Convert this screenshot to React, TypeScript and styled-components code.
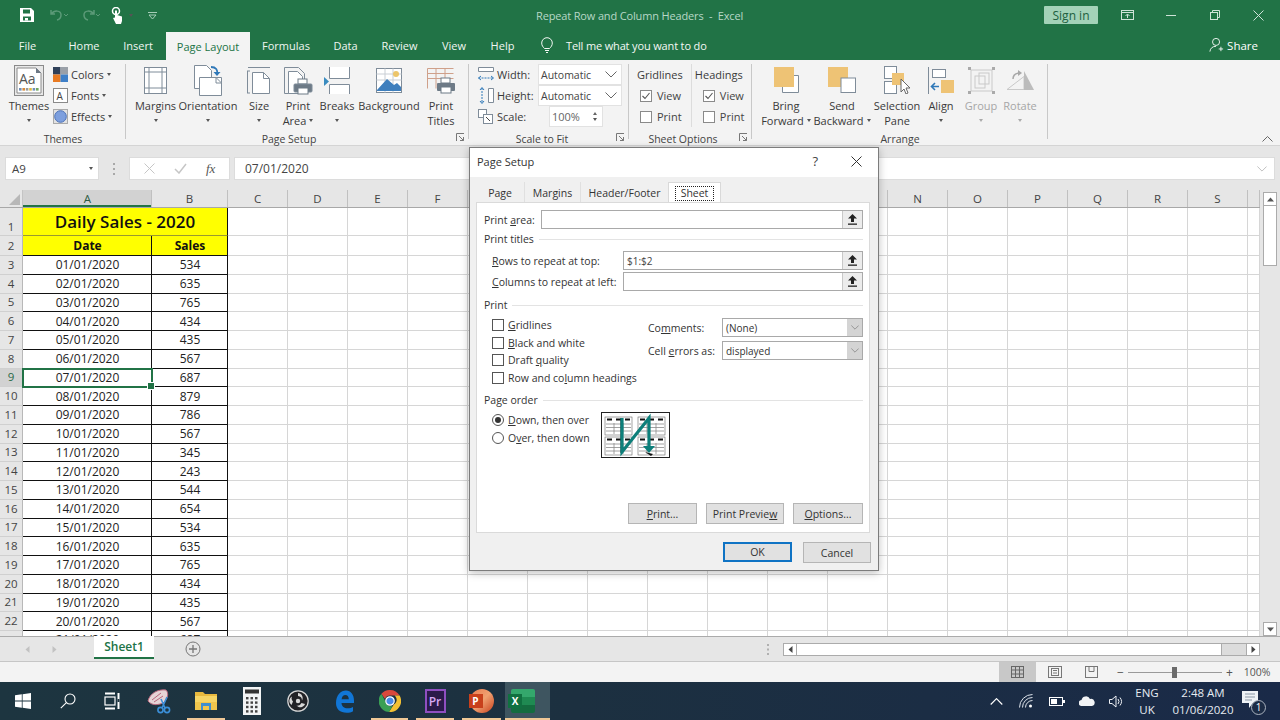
import React from 'react';
import styled, { createGlobalStyle } from 'styled-components';

const GlobalStyle = createGlobalStyle`
  html, body { margin: 0; padding: 0; background: #fff; }
  body { font-family: "Open Sans", "Liberation Sans", sans-serif; overflow: hidden; }
  * { box-sizing: border-box; }
`;

const Page = styled.div`
  position: relative; width: 1280px; height: 720px; overflow: hidden;
  display: flex; flex-direction: column; font-size: 12px; color: #333;
`;

/* ---------- title bar ---------- */
const TitleBar = styled.div`
  height: 30px; background: #217346; display: flex; align-items: center; color: #fff; flex: none;
`;
const Qat = styled.div`
  width: 536px; flex: none; display: flex; align-items: center; padding-left: 8px;
`;
const QatSlot = styled.div<{ $w: number }>`
  width: ${p => p.$w}px; display: flex; justify-content: center; align-items: center; flex: none;
`;
const DocTitle = styled.div`
  font-size: 11px; letter-spacing: -0.15px; color: #b7d8c6; white-space: pre; flex: 1;
`;
const SignIn = styled.div`
  width: 54px; height: 18px; background: #a3d2b8; color: #20603f; font-size: 12px; border-radius: 1px;
  display: flex; align-items: center; justify-content: center; margin-right: 8px; flex: none;
`;
const WinButton = styled.div`
  width: 43.5px; display: flex; justify-content: center; flex: none;
`;

/* ---------- tabs ---------- */
const TabBar = styled.div`
  height: 30px; background: #217346; display: flex; align-items: stretch; flex: none; padding-left: 3px;
`;
const Tab = styled.div<{ $w: number; $active?: boolean; $ml?: number }>`
  width: ${p => p.$w}px; margin-left: ${p => p.$ml ?? 0}px; flex: none;
  display: flex; align-items: center; justify-content: center; font-size: 11px;
  color: ${p => (p.$active ? '#217346' : '#f0f6f2')};
  background: ${p => (p.$active ? '#f3f3f3' : 'transparent')};
  margin-top: ${p => (p.$active ? 2 : 0)}px;
`;
const TellMe = styled.div`
  display: flex; align-items: center; margin-left: 14px; color: #f4f8f5; font-size: 11px; letter-spacing: -0.15px; gap: 13px;
`;
const Share = styled.div`
  margin-left: auto; display: flex; align-items: center; gap: 3px; padding-right: 22px; font-size: 11.5px; color: #fff;
`;

/* ---------- ribbon ---------- */
const Ribbon = styled.div`
  height: 86px; background: #f3f3f3; display: flex; flex: none; border-bottom: 1px solid #d4d4d4;
`;
const Group = styled.div<{ $w: number }>`
  position: relative; width: ${p => p.$w}px; flex: none; display: flex; flex-direction: column;
  &::after {
    content: ''; position: absolute; right: 0; top: 4px; bottom: 6px; width: 1px; background: #c8c8c8;
  }
`;
const GroupBody = styled.div<{ $pl?: number }>`
  height: 70px; margin-top: 2px; display: flex; padding-left: ${p => p.$pl ?? 0}px; flex: none;
`;
const GroupLabel = styled.div<{ $pr?: number }>`
  height: 16px; line-height: 16px; text-align: center; font-size: 10.5px; color: #444;
  padding-right: ${p => p.$pr ?? 0}px; margin-top: -1px;
`;
const Launcher = styled.div`
  position: absolute; right: 4px; bottom: 3px; width: 9px; height: 9px; display: flex;
`;
const LargeBtn = styled.div<{ $w: number; $off?: boolean }>`
  width: ${p => p.$w}px; flex: none; display: flex; flex-direction: column; align-items: center;
  font-size: 11px; line-height: 15px; color: ${p => (p.$off ? '#a6a6a6' : '#3a3a3a')}; white-space: nowrap;
`;
const IconSlot = styled.div`
  height: 36px; display: flex; align-items: center; justify-content: center; flex: none;
`;
const BtnLine = styled.div`
  height: 15px; display: flex; align-items: center; justify-content: center; gap: 3px;
`;
const Caret = styled.span<{ $off?: boolean }>`
  display: inline-block; width: 0; height: 0; border-left: 2.5px solid transparent; border-right: 2.5px solid transparent;
  border-top: 3px solid ${p => (p.$off ? '#aaa' : '#555')};
`;
const SmallCol = styled.div`
  display: flex; flex-direction: column; padding-top: 2px; margin-left: 3px;
`;
const SmallRow = styled.div`
  height: 21px; display: flex; align-items: center; gap: 3px; font-size: 11px; color: #3a3a3a; white-space: nowrap;
`;
const ScaleCol = styled.div`
  display: flex; flex-direction: column; padding: 2px 0 0 9px;
`;
const IconBox = styled.div`
  width: 16px; flex: none; display: flex; align-items: center;
`;
const ScaleLabel = styled.div`
  width: 38px; flex: none;
`;
const Combo = styled.div`
  width: 84px; height: 21px; background: #fff; border: 1px solid #e2e2e2; display: flex; align-items: center;
  justify-content: space-between; padding: 0 4px 0 2px; font-size: 10.5px; color: #444;
`;
const Spinner = styled.div`
  margin-left: 11px; width: 54px; height: 21px; background: #fff; border: 1px solid #e2e2e2; display: flex;
  align-items: center; justify-content: space-between; padding: 0 5px 0 2px; color: #666; font-size: 11px;
`;
const SpinArrows = styled.div`
  display: flex; flex-direction: column; gap: 3px;
`;
const SpinUp = styled.span`
  width: 0; height: 0; border-left: 2.5px solid transparent; border-right: 2.5px solid transparent; border-bottom: 3px solid #666;
`;
const OptCol = styled.div<{ $w: number; $line?: boolean }>`
  width: ${p => p.$w}px; height: 63px; flex: none; display: flex; flex-direction: column; margin-top: 2px;
  border-right: ${p => (p.$line ? '1px solid #dcdcdc' : 'none')};
`;
const OptHead = styled.div`
  height: 21px; display: flex; align-items: center; font-size: 11px; color: #3a3a3a;
`;
const OptRow = styled.div`
  height: 21px; display: flex; align-items: center; gap: 5px; padding-left: 3px; font-size: 11px; color: #444;
`;
const MiniBox = styled.div`
  width: 12px; height: 12px; background: #fff; border: 1px solid #8a8a8a; display: flex; flex: none;
`;
const RibbonEnd = styled.div`
  flex: 1; display: flex; justify-content: flex-end; align-items: flex-end; padding: 0 7px 3px 0;
`;

/* ---------- formula bar ---------- */
const FormulaBar = styled.div`
  height: 44px; background: #e6e6e6; flex: none; display: flex; align-items: flex-start; padding: 11px 5px 0 5px;
`;
const NameBox = styled.div`
  width: 94px; height: 23px; background: #fff; border: 1px solid #dcdcdc; display: flex; align-items: center;
  justify-content: space-between; padding: 0 5px 0 6px; font-size: 11.5px; color: #444; flex: none;
`;
const Dots = styled.div`
  width: 30px; flex: none; height: 23px; display: flex; align-items: center; justify-content: center;
`;
const FnBox = styled.div`
  width: 101px; height: 23px; background: #fff; border: 1px solid #dcdcdc; display: flex; align-items: center;
  justify-content: space-around; padding: 0 4px; color: #c2c2c2; flex: none;
`;
const FxText = styled.span`
  font-family: "Liberation Serif", serif; font-style: italic; color: #555; font-size: 13px;
`;
const FormulaInput = styled.div`
  flex: 1; height: 23px; margin-left: 4px; background: #fff; border: 1px solid #dcdcdc; display: flex; align-items: center;
  justify-content: space-between; padding: 0 7px 0 10px; font-size: 12px; color: #444;
`;

/* ---------- sheet ---------- */
const SheetArea = styled.div`
  height: 446px; flex: none; display: flex; background: #e6e6e6;
`;
const GridWrap = styled.div`
  width: 1260px; flex: none; display: flex; flex-direction: column; overflow: hidden;
`;
const HeaderRow = styled.div`
  height: 18px; display: flex; flex: none; border-bottom: 1px solid #a8a8a8;
`;
const Corner = styled.div`
  width: 23px; flex: none; position: relative; overflow: hidden; border-right: 1px solid #c4c4c4;
  &::after {
    content: ''; position: absolute; right: 2px; bottom: 2px; width: 0; height: 0;
    border-left: 11px solid transparent; border-bottom: 11px solid #b8b8b8;
  }
`;
const ColHead = styled.div<{ $w: number; $sel?: boolean }>`
  width: ${p => p.$w}px; flex: none; display: flex; align-items: center; justify-content: center; font-size: 11.5px;
  color: ${p => (p.$sel ? '#2b5a41' : '#444')}; background: ${p => (p.$sel ? '#d2d2d2' : 'transparent')};
  border-right: 1px solid #c0c0c0;
  ${p => (p.$sel ? 'box-shadow: inset 0 -2px 0 #217346; padding-left: 1px;' : '')}
`;
const Rows = styled.div`
  flex: 1; background: #fff; overflow: hidden;
`;
const Row = styled.div<{ $h: number }>`
  height: ${p => p.$h}px; display: flex;
`;
const RowHead = styled.div<{ $sel?: boolean; $bottom?: boolean }>`
  width: 23px; flex: none; background: ${p => (p.$sel ? '#d2d2d2' : '#e6e6e6')}; color: ${p => (p.$sel ? '#2b6a48' : '#444')};
  border-right: 1px solid #b8b8b8; border-bottom: 1px solid #d0d0d0; display: flex; justify-content: center;
  align-items: ${p => (p.$bottom ? 'flex-end' : 'center')}; font-size: 11.5px; line-height: 16px;
`;
const Cell = styled.div<{ $w: number }>`
  width: ${p => p.$w}px; flex: none; border-right: 1px solid #d6d6d6; border-bottom: 1px solid #d6d6d6;
`;
const DataCell = styled.div<{ $w: number; $sel?: boolean }>`
  position: relative; width: ${p => p.$w}px; flex: none; border-right: 1px solid #111; border-bottom: 1px solid #111;
  display: flex; align-items: center; justify-content: center; font-size: 12px; color: #222; padding-left: 1px;
  ${p => p.$sel ? `
    outline: 2px solid #217346; outline-offset: -1px; z-index: 1;
    &::after { content: ''; position: absolute; right: -4px; bottom: -4px; width: 6px; height: 6px; background: #217346; border: 1px solid #fff; }
  ` : ''}
`;
const TitleCell = styled.div`
  width: 205px; flex: none; background: #ffff00; border-right: 1px solid #111; border-bottom: 1px solid #9a9a30;
  display: flex; align-items: center; justify-content: center; font-size: 17px; font-weight: 600; color: #111;
  padding-bottom: 1px;
`;
const HeadCell = styled.div<{ $w: number }>`
  width: ${p => p.$w}px; flex: none; background: #ffff00; border-right: 1px solid #111; border-bottom: 1px solid #111;
  display: flex; align-items: center; justify-content: center; font-size: 12px; font-weight: 700; color: #111; padding-left: 1px;
`;
const VScroll = styled.div`
  flex: 1; display: flex; flex-direction: column; align-items: center; padding-top: 2px;
`;
const VBtn = styled.div`
  width: 14px; height: 14px; background: #fff; border: 1px solid #ababab; display: flex; align-items: center; justify-content: center; flex: none;
`;
const VThumb = styled.div`
  width: 14px; height: 60px; background: #fff; border: 1px solid #ababab; border-top: none; flex: none;
`;
const VTrack = styled.div`
  flex: 1;
`;

/* ---------- sheet tabs / status ---------- */
const SheetBar = styled.div`
  height: 26px; flex: none; background: #e6e6e6; border-top: 1px solid #ababab; border-bottom: 1px solid #c6c6c6; display: flex; align-items: flex-start;
`;
const SheetNav = styled.div`
  width: 94px; flex: none; height: 24px; display: flex; align-items: center; padding-left: 24px; gap: 20px;
`;
const SheetTab = styled.div`
  width: 60px; height: 23px; margin-top: -1px; background: #fff; border-bottom: 2px solid #217346; color: #217346; font-weight: 600;
  font-size: 12px; display: flex; align-items: center; justify-content: center; flex: none;
`;
const AddSheet = styled.div`
  margin-left: 31px; height: 24px; display: flex; align-items: center; flex: none;
`;
const SplitDots = styled.div`
  margin-left: 560px; width: 14px; height: 24px; display: flex; align-items: center; justify-content: center; flex: none;
`;
const HScroll = styled.div`
  margin: 6px 0 0 8px; width: 477px; height: 13px; display: flex; flex: none;
`;
const HBtn = styled.div`
  width: 14px; height: 13px; background: #fff; border: 1px solid #ababab; display: flex; align-items: center; justify-content: center; flex: none;
`;
const HThumb = styled.div`
  width: 425px; background: #fff; border: 1px solid #ababab; border-left: none; flex: none;
`;
const HTrack = styled.div`
  flex: 1; background: #dcdcdc; border-top: 1px solid #ababab; border-bottom: 1px solid #ababab;
`;
const StatusBar = styled.div`
  height: 20px; flex: none; background: #f3f3f3; display: flex; align-items: stretch; justify-content: flex-end;
`;
const ViewBtn = styled.div<{ $active?: boolean }>`
  width: 37px; flex: none; display: flex; align-items: center; justify-content: center; background: ${p => (p.$active ? '#c8c8c8' : 'transparent')};
`;
const ZoomArea = styled.div`
  width: 170px; flex: none; display: flex; align-items: center; padding-left: 7px; color: #555;
`;
const ZoomTrack = styled.div`
  position: relative; width: 94px; height: 1px; background: #9a9a9a; margin: 0 4px 0 4px;
  &::after { content: ''; position: absolute; left: 44px; top: -5px; width: 5px; height: 11px; background: #6b6b6b; }
`;
const ZoomPct = styled.div`
  margin-left: 11px; font-size: 10.5px; color: #555;
`;

/* ---------- taskbar ---------- */
const Taskbar = styled.div`
  height: 38px; flex: none; background: linear-gradient(90deg, #1d3540 0%, #1c3040 45%, #1a2a48 100%);
  display: flex; align-items: stretch; color: #e8eef4;
`;
const TaskItem = styled.div<{ $w: number; $open?: boolean; $active?: boolean }>`
  position: relative; width: ${p => p.$w}px; flex: none; display: flex; align-items: center; justify-content: center;
  background: ${p => (p.$active ? '#3e5560' : 'transparent')};
  ${p => p.$open ? `
    &::after { content: ''; position: absolute; left: ${p.$active ? 0 : 4}px; right: ${p.$active ? 0 : 4}px; bottom: 0; height: 2px; background: #f0c896; }
  ` : ''}
`;
const TaskIconShift = styled.div`
  display: flex; margin-right: 9px;
`;
const Tray = styled.div`
  margin-left: auto; display: flex; align-items: stretch; padding-right: 22px;
`;
const TrayItem = styled.div<{ $w: number }>`
  width: ${p => p.$w}px; flex: none; display: flex; align-items: center; justify-content: center; text-align: center;
`;
const TrayText = styled.div`
  font-size: 11.5px; line-height: 17px; color: #e6ecf2; white-space: nowrap;
`;

/* ---------- dialog ---------- */
const Dialog = styled.div`
  position: absolute; left: 469px; top: 147px; width: 410px; height: 424px; background: #f0f0f0; border: 1px solid #7c7c7c;
  box-shadow: 0 2px 8px rgba(0,0,0,.25); display: flex; flex-direction: column; font-size: 10.5px; color: #333;
`;
const DlgTitle = styled.div`
  height: 26px; background: #fff; display: flex; align-items: center; padding: 0 16px 0 7px; font-size: 11px; flex: none;
  box-shadow: 0 3px 0 #fff;
`;
const DlgHelp = styled.div`
  margin-left: auto; font-size: 13px; color: #444; margin-right: 33px;
`;
const DlgTabs = styled.div`
  height: 28px; display: flex; align-items: flex-end; padding-left: 6px; flex: none;
`;
const DlgTab = styled.div<{ $w: number }>`
  width: ${p => p.$w}px; height: 20px; padding-top: 2px; display: flex; align-items: center; justify-content: center; flex: none; border-right: 1px solid #e0e0e0;
`;
const DlgTabActive = styled.div`
  margin-left: -1px; width: 53px; height: 20px; background: #fff; border: 1px solid #d9d9d9; border-bottom: none; display: flex; align-items: flex-start; justify-content: center; padding-top: 3px; flex: none;
`;
const FocusBox = styled.span`
  border: 1px dotted #222; padding: 0 5px; height: 15px; line-height: 13px; display: block;
`;
const Panel = styled.div`
  margin-left: 6px; width: 394px; height: 331px; background: #fff; border: 1px solid #dadada;
  display: flex; flex-direction: column; padding: 7px 6px 8px 7px; flex: none;
`;
const FieldRow = styled.div<{ $mt?: number; $indent?: boolean }>`
  display: flex; align-items: center; height: 19px; margin-top: ${p => p.$mt ?? 0}px; padding-left: ${p => (p.$indent ? 8 : 0)}px; flex: none;
`;
const FieldLabel = styled.div<{ $w: number }>`
  width: ${p => p.$w}px; flex: none; white-space: nowrap;
`;
const RefInput = styled.div`
  flex: 1; height: 19px; border: 1px solid #a9a9a9; display: flex; align-items: stretch;
`;
const RefValue = styled.div`
  flex: 1; padding-left: 3px; display: flex; align-items: center; font-size: 10px; color: #444;
`;
const RefBtn = styled.div`
  width: 20px; background: #ececec; border-left: 1px solid #c8c8c8; display: flex; align-items: center; justify-content: center;
`;
const SectionHead = styled.div<{ $mt: number }>`
  height: 14px; margin-top: ${p => p.$mt}px; display: flex; align-items: center; gap: 5px; flex: none;
  &::after { content: ''; flex: 1; height: 1px; background: #e3e3e3; }
`;
const PrintBlock = styled.div`
  display: flex; margin-top: 4px; height: 71px; flex: none;
`;
const CheckCol = styled.div`
  width: 164px; flex: none; padding-left: 8px; display: flex; flex-direction: column;
`;
const CheckRow = styled.div`
  height: 17.7px; display: flex; align-items: center; gap: 4px; white-space: nowrap;
`;
const CheckBox = styled.span`
  width: 12px; height: 12px; border: 1px solid #555; background: #fff; flex: none;
`;
const SelectCol = styled.div`
  flex: 1; display: flex; flex-direction: column; gap: 4px; padding-top: 2px;
`;
const SelectRow = styled.div`
  display: flex; align-items: center; height: 19px;
`;
const SelectBox = styled.div`
  flex: 1; height: 19px; border: 1px solid #a9a9a9; display: flex; align-items: stretch;
`;
const SelectValue = styled.div`
  flex: 1; padding-left: 3px; display: flex; align-items: center; font-size: 10px;
`;
const SelectBtn = styled.div`
  width: 15px; background: #d4d4d4; display: flex; align-items: center; justify-content: center;
`;
const OrderBlock = styled.div`
  display: flex; margin-top: 4px; padding-left: 8px; flex: none; height: 48px;
`;
const RadioCol = styled.div`
  width: 109px; flex: none; display: flex; flex-direction: column;
`;
const RadioRow = styled.div`
  height: 18px; display: flex; align-items: center; gap: 4px; white-space: nowrap;
`;
const Radio = styled.span<{ $on?: boolean }>`
  width: 12px; height: 12px; border: 1px solid #555; border-radius: 50%; background: #fff; flex: none; display: flex; align-items: center; justify-content: center;
  &::after { content: ''; width: 6px; height: 6px; border-radius: 50%; background: ${p => (p.$on ? '#333' : 'transparent')}; }
`;
const OrderPic = styled.div`
  width: 69px; height: 46px; margin-top: 1px; border: 1px solid #222; background: #fff; flex: none; display: flex;
`;
const PanelButtons = styled.div`
  margin-top: auto; display: flex; justify-content: flex-end; gap: 9px; flex: none;
`;
const DlgBtn = styled.div<{ $w: number; $primary?: boolean }>`
  width: ${p => p.$w}px; height: ${p => (p.$primary ? 20 : 21)}px; background: #e1e1e1; border: ${p => (p.$primary ? '2px solid #0f73c4' : '1px solid #b5b5b5')};
  display: flex; align-items: center; justify-content: center; flex: none;
`;
const DlgFooter = styled.div`
  display: flex; justify-content: flex-end; gap: 11px; padding: 9px 7px 0 0; flex: none;
`;

/* ---------- drawings ---------- */
const s = '#7f8c99';
const CloseGlyph = ({ c = '#fff', z = 11 }: { c?: string; z?: number }) => (
  <svg width={z} height={z} viewBox="0 0 11 11"><path d="M.5.5l10 10M10.5.5l-10 10" stroke={c} fill="none" /></svg>
);
const Chevron = ({ c = '#666', w = 12 }: { c?: string; w?: number }) => (
  <svg width={w} height={w / 2 + 1} viewBox="0 0 12 7"><path d="M.5.5L6 6l5.5-5.5" stroke={c} fill="none" /></svg>
);
const UpRef = () => (
  <svg width="9" height="11" viewBox="0 0 9 11"><path d="M4.5 0L9 4.5H6V8H3V4.5H0z" fill="#222" /><rect y="9.5" width="9" height="1.3" fill="#222" /></svg>
);
const PrinterBit = ({ x, y }: { x: number; y: number }) => (
  <g transform={`translate(${x} ${y})`}>
    <rect x="4" y="0" width="9" height="5" fill="#fff" stroke="#6d7a86" />
    <rect x="0" y="5" width="18" height="8" rx="1" fill="#6d7a86" />
    <rect x="4" y="9" width="10" height="6" fill="#fff" stroke="#6d7a86" />
  </g>
);
const ThemesIcon = () => (
  <svg width="30" height="31" viewBox="0 0 30 31">
    <rect x=".5" y=".5" width="29" height="30" fill="#e8e8e8" stroke="#8a8a8a" />
    <path d="M3 3h19l5 5v20H3z" fill="#fff" stroke="#8a8a8a" />
    <path d="M22 3l5 5h-5z" fill="#6b7785" />
    <text x="5" y="19" fontFamily="Open Sans, sans-serif" fontSize="14" fill="#555">Aa</text>
    {['#6f8fb8', '#d88a3a', '#999', '#e0b840', '#6f8fb8', '#70a860'].map((c, i) => (
      <rect key={i} x={5 + i * 3.4} y="23" width="2.6" height="2.6" fill={c} />
    ))}
  </svg>
);
const ColorsIcon = () => (
  <svg width="15" height="15" viewBox="0 0 15 15">
    <rect width="7.5" height="7.5" fill="#2f4059" /><rect x="7.5" width="7.5" height="7.5" fill="#9aa0a8" />
    <rect y="7.5" width="7.5" height="7.5" fill="#e87a22" /><rect x="7.5" y="7.5" width="7.5" height="7.5" fill="#3f80c8" />
  </svg>
);
const FontsIcon = () => (
  <svg width="15" height="15" viewBox="0 0 15 15">
    <rect x=".5" y=".5" width="14" height="14" fill="#fff" stroke="#8a8a8a" />
    <text x="3.5" y="11.5" fontFamily="Open Sans, sans-serif" fontSize="10" fill="#444">A</text>
  </svg>
);
const EffectsIcon = () => (
  <svg width="15" height="15" viewBox="0 0 15 15">
    <rect x=".5" y=".5" width="14" height="14" fill="#e2e2e2" stroke="#aaa" />
    <circle cx="7.5" cy="7.5" r="5.8" fill="#7d9fde" stroke="#4c72b8" />
  </svg>
);
const MarginsIcon = () => (
  <svg width="23" height="27" viewBox="0 0 23 27" fill="none" stroke={s}>
    <rect x=".5" y=".5" width="22" height="26" fill="#fff" />
    <path d="M5 .5v26M18 .5v26M.5 5h22M.5 21h22" />
  </svg>
);
const OrientationIcon = () => (
  <svg width="28" height="31" viewBox="0 0 28 31" fill="none" stroke={s}>
    <path d="M.5.5h12l5 5v18H.5z" fill="#fff" />
    <path d="M5.5 12.5h22v18h-22z" fill="#fff" />
    <path d="M22 12.5l5.5 5.5h-5.5z" fill="#fff" />
    <path d="M17 2c5 0 7 3 6 7" stroke="#2f78b8" strokeWidth="1.8" />
    <path d="M19.5 7l3.5 4 3.5-4z" fill="#2f78b8" stroke="none" />
  </svg>
);
const SizeIcon = () => (
  <svg width="24" height="27" viewBox="0 0 24 27" fill="none" stroke={s}>
    <path d="M1 .5h22" /><path d="M.5 4v22M0 4h3M0 26h3" />
    <path d="M5.5 5.5h11l6 6v15h-17z" fill="#fff" /><path d="M16.5 5.5v6h6" />
  </svg>
);
const PrintAreaIcon = () => (
  <svg width="29" height="29" viewBox="0 0 29 29" fill="none" stroke={s}>
    <path d="M.5 1.5h14l6 6v20H.5z" fill="#f3f3f3" />
    <path d="M4.5 5.5h9l5 5v17h-14z" fill="#fff" />
    <PrinterBit x={10} y={13} />
  </svg>
);
const BreaksIcon = () => (
  <svg width="26" height="27" viewBox="0 0 26 27" fill="none" stroke={s}>
    <path d="M5.5 0v11.5h20V0M5.5 27V17.5h20V27" fill="#fff" />
    <path d="M0 10l5 4.5L0 19z" fill="#3a8cc0" stroke="none" />
  </svg>
);
const BackgroundIcon = () => (
  <svg width="26" height="25" viewBox="0 0 26 25">
    <rect x=".5" y=".5" width="25" height="24" fill="#fff" stroke={s} />
    <path d="M.5 6h25M.5 12h25M9 .5v24M17 .5v24" stroke="#c9ced4" />
    <circle cx="20" cy="6" r="3" fill="#ecc56a" />
    <path d="M1 22l10-11 7 6 3-2 4 4v4H1z" fill="#3f7fbd" />
  </svg>
);
const PrintTitlesIcon = () => (
  <svg width="29" height="27" viewBox="0 0 29 27" fill="none">
    <path d="M.5 1.5h26M.5 6.5h26M.5 11.5h26M.5 1.5v20M9 1.5v20M18 1.5v20" stroke="#cfa08a" />
    <PrinterBit x={10} y={11} />
  </svg>
);
const BringIcon = () => (
  <svg width="25" height="26" viewBox="0 0 25 26">
    <path d="M8.5 8.5h16v17h-16z" fill="#fff" stroke={s} />
    <rect width="20" height="20" fill="#eec375" />
  </svg>
);
const SendIcon = () => (
  <svg width="28" height="26" viewBox="0 0 28 26">
    <rect width="20" height="20" fill="#eec375" />
    <rect x="13" y="11" width="14.5" height="14.5" fill="#fff" stroke={s} />
  </svg>
);
const SelectionIcon = () => (
  <svg width="27" height="28" viewBox="0 0 27 28" fill="none" stroke={s}>
    <rect x=".5" y=".5" width="12" height="12" fill="#fff" />
    <rect x=".5" y="15.5" width="12" height="12" fill="#fff" />
    <rect x="8" y="7" width="12" height="12" fill="#eec375" stroke="none" />
    <path d="M17 13l9 9h-4l2 5-2 1-2-5-3 3z" fill="#fff" stroke="#666" />
  </svg>
);
const AlignIcon = () => (
  <svg width="27" height="27" viewBox="0 0 27 27">
    <path d="M.5 0v27" stroke={s} />
    <rect x="4.5" y="2.5" width="13" height="8" fill="#fff" stroke={s} />
    <rect x="13" y="13" width="13" height="13" fill="#eec375" />
    <path d="M11 19.5H4M7 16l-3.5 3.5L7 23" stroke="#2f78b8" strokeWidth="1.6" fill="none" />
  </svg>
);
const GroupIcon = () => (
  <svg width="27" height="27" viewBox="0 0 27 27" fill="none" stroke="#c9c9c9">
    <rect x="3" y="3" width="21" height="21" />
    <rect x="7" y="9" width="10" height="12" /><rect x="11" y="6" width="10" height="11" />
    <g fill="#aaa" stroke="none"><rect width="3" height="3" /><rect x="24" width="3" height="3" /><rect y="24" width="3" height="3" /><rect x="24" y="24" width="3" height="3" /></g>
  </svg>
);
const RotateIcon = () => (
  <svg width="29" height="22" viewBox="0 0 29 22">
    <path d="M1 20.5l17-13v13z" fill="#f3f3f3" stroke="#c9c9c9" />
    <path d="M18 2l10 19H18z" fill="#bcbcbc" />
    <path d="M7 10c0-4 3-6 7-6" stroke="#a8a8a8" strokeWidth="1.5" fill="none" /><path d="M12 1l4 3-4 3z" fill="#a8a8a8" />
  </svg>
);
const LauncherIcon = () => (
  <svg width="9" height="9" viewBox="0 0 9 9" fill="none" stroke="#777">
    <path d="M.5 8V.5H8" /><path d="M3 3l4.5 4.5M4 7.5h3.5V4" />
  </svg>
);
const WidthIcon = () => (
  <svg width="16" height="15" viewBox="0 0 16 15" fill="none" stroke={s}>
    <path d="M.5 4.5h15v-4H.5z" fill="#fff" /><path d="M.5 11h15" stroke="#2f78b8" strokeDasharray="2 1" />
    <path d="M3 9l-2.5 2L3 13M13 9l2.5 2L13 13" stroke="#2f78b8" />
  </svg>
);
const HeightIcon = () => (
  <svg width="16" height="17" viewBox="0 0 16 17" fill="none" stroke={s}>
    <path d="M10.5 1.5h5v14h-5z" fill="#fff" /><path d="M4 1v15" stroke="#2f78b8" strokeDasharray="2 1" />
    <path d="M2 3l2-2.5L6 3M2 14l2 2.5L6 14" stroke="#2f78b8" />
  </svg>
);
const ScaleIcon = () => (
  <svg width="15" height="15" viewBox="0 0 15 15" fill="none" stroke={s}>
    <rect x=".5" y=".5" width="8" height="8" fill="#fff" /><rect x="5.5" y="5.5" width="9" height="9" fill="#fff" />
    <path d="M8 8l4 4" stroke="#444" />
  </svg>
);
const CheckMark = () => (
  <svg width="10" height="10" viewBox="0 0 10 10"><path d="M1.5 5l2.5 2.5L8.5 2" stroke="#555" strokeWidth="1.1" fill="none" /></svg>
);
const OrderDrawing = () => {
  const page = (x: number, y: number) => (
    <g key={`${x}-${y}`} transform={`translate(${x} ${y})`}>
      <rect width="27" height="18" fill="#fff" stroke="#666" strokeWidth=".6" />
      <path d="M2 2.5h5M11 2.5h5M20 2.5h5" stroke="#111" strokeWidth="2" />
      <path d="M1 7h25M1 10.5h25M1 14h25M9 6v11M18 6v11" stroke="#8a8a8a" strokeWidth=".8" />
    </g>
  );
  return (
    <svg width="67" height="44" viewBox="0 0 67 44">
      {page(3, 4)}{page(36, 4)}{page(3, 24)}{page(36, 24)}
      <path d="M19 5v35" stroke="#111" strokeWidth="1" />
      <path d="M20 5v34L47 5v32" stroke="#0d7f7a" strokeWidth="3.2" fill="none" />
      <path d="M41 33h12l-6 7z" fill="#0d7f7a" />
      <path d="M43 39l8 2-2 2z" fill="#111" />
    </svg>
  );
};
const Tri = ({ d, c = '#555' }: { d: 'u' | 'd' | 'l' | 'r'; c?: string }) => (
  <svg width="7" height="7" viewBox="0 0 7 7">
    <path d={{ u: 'M3.5 1.5L7 5.5H0z', d: 'M0 1.5h7L3.5 5.5z', l: 'M5.5 0v7L1.5 3.5z', r: 'M1.5 0v7l4-3.5z' }[d]} fill={c} />
  </svg>
);

/* taskbar logos */
const WinLogo = () => (
  <svg width="16" height="16" viewBox="0 0 16 16" fill="#fff"><path d="M0 2.3l6.8-1v6.3H0zM7.6 1.2L16 0v7.6H7.6zM0 8.4h6.8v6.3L0 13.7zM7.6 8.4H16V16l-8.4-1.2z" /></svg>
);
const SearchLogo = () => (
  <svg width="16" height="16" viewBox="0 0 16 16" fill="none" stroke="#fff" strokeWidth="1.1"><circle cx="10" cy="6" r="5" /><path d="M6.4 9.6L.8 15.2" /></svg>
);
const TaskViewLogo = () => (
  <svg width="17" height="18" viewBox="0 0 17 18" fill="none" stroke="#fff" strokeWidth="1.2"><rect x="1" y="5" width="10" height="8" /><path d="M1 1.5h10M1 16.5h10M14.5 1v16" strokeWidth="2" /><path d="M14.5 7v3" stroke="#1d3340" strokeWidth="2" /></svg>
);
const SnipLogo = () => (
  <svg width="24" height="26" viewBox="0 0 24 26">
    <path d="M1 13C3 5 11 1 19 2c3 3 2 9-3 13-5 2-11 3-15-2z" fill="#e6d4d6" stroke="#b8667c" />
    <path d="M5 12l9-7M7 14l9-6" stroke="#b8667c" />
    <path d="M14 11l4 9M20 9l-5 11" stroke="#3b8fd8" strokeWidth="1.6" />
    <circle cx="13.5" cy="22" r="2.6" fill="none" stroke="#3b8fd8" strokeWidth="1.6" /><circle cx="20" cy="22" r="2.6" fill="none" stroke="#3b8fd8" strokeWidth="1.6" />
  </svg>
);
const FolderLogo = () => (
  <svg width="22" height="20" viewBox="0 0 22 20">
    <path d="M0 1h8l2 2h12v16H0z" fill="#e8b93e" /><path d="M0 5h22v14H0z" fill="#f6d565" />
    <rect x="0" y="11" width="22" height="8" fill="#f0c64c" />
    <path d="M6 12h10v7h-2v-4H8v4H6z" fill="#3f8fd0" />
  </svg>
);
const CalcLogo = () => (
  <svg width="18" height="28" viewBox="0 0 18 28">
    <rect width="18" height="28" fill="#f2f4f5" />
    <rect x="2" y="2.5" width="14" height="4" fill="#333" />
    {[0, 1, 2, 3].map(r => [0, 1, 2].map(c => <rect key={`${r}${c}`} x={3 + c * 4.5} y={10 + r * 4.4} width="2.5" height="2.4" fill="#444" />))}
  </svg>
);
const ObsLogo = () => (
  <svg width="22" height="22" viewBox="0 0 22 22">
    <circle cx="11" cy="11" r="10.2" fill="#222226" stroke="#d8d8d8" strokeWidth="1.2" />
    <circle cx="11" cy="11" r="2.2" fill="#d8d8d8" />
    <path d="M11 3a5 5 0 014 7.5A4.5 4.5 0 0011 6zM18 14a5 5 0 01-8.5 1.5 4.5 4.5 0 005-2.500zM4.500 15a5 5 0 01.5-8.500 4.500 4.500 0 001 5z" fill="#d8d8d8" />
  </svg>
);
const EdgeLogo = () => (
  <svg width="19" height="23" viewBox="0 0 19 23">
    <path d="M1 13C1 5 6 .5 11 .5c5 0 8 4.500 8 10v2.500H6.500c.2 3.600 2.800 5.300 6 5.300 2.200 0 4.400-.6 5.500-1.300v4.300c-1.600 1-3.800 1.500-6.300 1.500C5 22.800 1 19 1 13zm5.600-3.800h7.200c0-2.700-1.400-4.200-3.400-4.200-2 0-3.500 1.600-3.800 4.200z" fill="#1176d6" />
  </svg>
);
const ChromeLogo = () => (
  <svg width="22" height="22" viewBox="0 0 22 22">
    <path d="M11 0a11 11 0 019.6 5.6H11a5.400 5.400 0 00-5 3.400L2.400 3.800A11 11 0 0111 0z" fill="#d9483b" />
    <path d="M20.600 5.600A11 11 0 0110 22l4.800-7.400a5.400 5.400 0 00.8-9z" fill="#f3c033" />
    <path d="M2.400 3.800L7.200 13a5.400 5.400 0 006.300 3L10 22A11 11 0 012.400 3.800z" fill="#3a9f55" />
    <circle cx="11" cy="11" r="4.200" fill="#4a8be8" stroke="#fff" strokeWidth="1.200" />
  </svg>
);
const BadgeBox = styled.div`
  width: 21px; height: 24px; border: 2px solid #8f4fc0; background: #2b1a4a; color: #d7a8f5; font-size: 12px; font-weight: 600;
  display: flex; align-items: center; justify-content: center;
`;
const PptLogo = styled.div`
  position: relative; width: 24px; height: 24px; border-radius: 50%; background: linear-gradient(135deg,#ea7a50,#f0a070 50%,#c8401c);
  &::after { content: 'P'; position: absolute; left: -1px; top: 5px; width: 14px; height: 14px; background: #c8401c; color: #fff; font-size: 10px; font-weight: 700; line-height: 14px; text-align: center; }
`;
const XlLogo = styled.div`
  position: relative; width: 24px; height: 24px; border-radius: 2px; background: linear-gradient(180deg,#34a76c 0 33%,#1f8a52 33% 66%,#146c3f 66%);
  &::after { content: 'X'; position: absolute; left: -3px; top: 5px; width: 14px; height: 14px; background: #107040; color: #fff; font-size: 10px; font-weight: 700; line-height: 14px; text-align: center; }
`;
const NotifyWrap = styled.div`
  position: relative; width: 16px; height: 17px; margin-top: -3px; flex: none; display: flex;
`;
const NotifyBadge = styled.div`
  position: absolute; right: -8px; bottom: -7px; width: 15px; height: 15px; border-radius: 50%; background: #1c2c46; border: 1px solid #aab3bf; color: #fff;
  font-size: 10px; line-height: 13px; text-align: center;
`;

const dates = ['534','635','765','434','435','567','687','879','786','567','345','243','544','654','534','635','765','434','435','567','687'];
const letters = 'CDEFGHIJKLMNOPQRS'.split('');
const blanks = () => [...letters.map(l => <Cell key={l} $w={60} />), <Cell key="end" $w={12} />];

export default function App() {
  return (
    <Page>
      <GlobalStyle />
      <TitleBar>
        <Qat>
          <QatSlot $w={38}>
            <svg width="14" height="14" viewBox="0 0 14 14"><path d="M0 0h11l3 3v11H0z" fill="#fff" /><rect x="3" y="1.500" width="7" height="4" fill="#217346" /><rect x="3" y="8.500" width="8" height="4" fill="#217346" /><rect x="5" y="10" width="3" height="2.500" fill="#fff" /></svg>
          </QatSlot>
          <QatSlot $w={26}>
            <svg width="18" height="12" viewBox="0 0 18 12" fill="none" stroke="#5b9a78" strokeWidth="1.500"><path d="M1 1v4h4M1.500 5C4 1 11 1 11 6c0 3-2 4.500-4 5" /><path d="M14 5l2 2 2-2" strokeWidth="1" /></svg>
          </QatSlot>
          <QatSlot $w={38}>
            <svg width="18" height="12" viewBox="0 0 18 12" fill="none" stroke="#5b9a78" strokeWidth="1.500"><path d="M12 1v4H8M11.500 5C9 1 2 1 2 6c0 3 2 4.500 4 5" /><path d="M14 5l2 2 2-2" strokeWidth="1" /></svg>
          </QatSlot>
          <QatSlot $w={14}>
            <svg width="13" height="17" viewBox="0 0 13 17" fill="#fff"><circle cx="5" cy="4" r="3.500" fill="none" stroke="#fff" strokeWidth="1.500" /><path d="M4 3.500h2V8l5 1.500V14l-1 3H5L2 11l2-.5z" /></svg>
          </QatSlot>
          <QatSlot $w={14}><Caret /></QatSlot>
          <QatSlot $w={28}>
            <svg width="9" height="7" viewBox="0 0 9 7"><path d="M0 .5h9" stroke="#a6cdb8" /><path d="M1 3h7L4.500 7z" fill="none" stroke="#a6cdb8" /></svg>
          </QatSlot>
        </Qat>
        <DocTitle>Repeat Row and Column Headers  -  Excel</DocTitle>
        <SignIn>Sign in</SignIn>
        <WinButton><svg width="13" height="10" viewBox="0 0 13 10" fill="none" stroke="#cfe3d8"><rect x=".5" y=".5" width="12" height="9" /><path d="M.5 2.500h12M6.500 8V4.500M4.500 6l2-2 2 2" /></svg></WinButton>
        <WinButton><svg width="10" height="1" viewBox="0 0 10 1"><rect width="10" height="1" fill="#cfe3d8" /></svg></WinButton>
        <WinButton><svg width="10" height="10" viewBox="0 0 10 10" fill="none" stroke="#cfe3d8"><rect x=".5" y="2.500" width="7" height="7" /><path d="M2.500 2.500v-2h7v7h-2" /></svg></WinButton>
        <WinButton><CloseGlyph c="#cfe3d8" /></WinButton>
      </TitleBar>

      <TabBar>
        <Tab $w={49}>File</Tab>
        <Tab $w={64}>Home</Tab>
        <Tab $w={44}>Insert</Tab>
        <Tab $w={84} $ml={6} $active>Page Layout</Tab>
        <Tab $w={72}>Formulas</Tab>
        <Tab $w={47}>Data</Tab>
        <Tab $w={61}>Review</Tab>
        <Tab $w={48}>View</Tab>
        <Tab $w={49}>Help</Tab>
        <TellMe>
          <svg width="12" height="17" viewBox="0 0 12 17" fill="none" stroke="#f4f8f5"><path d="M3.500 11.500C2 10 .7 8.500.7 6a5.300 5.300 0 0110.600 0c0 2.500-1.300 4-2.800 5.500z" /><path d="M4 13.500h4M5 15.500h2" /></svg>
          <span>Tell me what you want to do</span>
        </TellMe>
        <Share>
          <svg width="15" height="16" viewBox="0 0 17 17" fill="none" stroke="#fff"><circle cx="8" cy="5" r="4" /><path d="M1 16c.5-4 3-6 7-6M11 13h5M13.500 10.500v5" /></svg>
          <span>Share</span>
        </Share>
      </TabBar>

      <Ribbon>
        <Group $w={126}>
          <GroupBody $pl={8}>
            <LargeBtn $w={42}>
              <IconSlot><ThemesIcon /></IconSlot>
              <BtnLine>Themes</BtnLine>
              <BtnLine><Caret /></BtnLine>
            </LargeBtn>
            <SmallCol>
              <SmallRow><ColorsIcon />Colors<Caret /></SmallRow>
              <SmallRow><FontsIcon />Fonts<Caret /></SmallRow>
              <SmallRow><EffectsIcon />Effects<Caret /></SmallRow>
            </SmallCol>
          </GroupBody>
          <GroupLabel>Themes</GroupLabel>
        </Group>

        <Group $w={343}>
          <GroupBody $pl={8}>
            <LargeBtn $w={43}><IconSlot><MarginsIcon /></IconSlot><BtnLine>Margins</BtnLine><BtnLine><Caret /></BtnLine></LargeBtn>
            <LargeBtn $w={62}><IconSlot><OrientationIcon /></IconSlot><BtnLine>Orientation</BtnLine><BtnLine><Caret /></BtnLine></LargeBtn>
            <LargeBtn $w={40}><IconSlot><SizeIcon /></IconSlot><BtnLine>Size</BtnLine><BtnLine><Caret /></BtnLine></LargeBtn>
            <LargeBtn $w={38}><IconSlot><PrintAreaIcon /></IconSlot><BtnLine>Print</BtnLine><BtnLine>Area<Caret /></BtnLine></LargeBtn>
            <LargeBtn $w={40}><IconSlot><BreaksIcon /></IconSlot><BtnLine>Breaks</BtnLine><BtnLine><Caret /></BtnLine></LargeBtn>
            <LargeBtn $w={64}><IconSlot><BackgroundIcon /></IconSlot><BtnLine>Background</BtnLine></LargeBtn>
            <LargeBtn $w={40}><IconSlot><PrintTitlesIcon /></IconSlot><BtnLine>Print</BtnLine><BtnLine>Titles</BtnLine></LargeBtn>
          </GroupBody>
          <GroupLabel $pr={17}>Page Setup</GroupLabel>
          <Launcher><LauncherIcon /></Launcher>
        </Group>

        <Group $w={160}>
          <GroupBody>
            <ScaleCol>
              <SmallRow><IconBox><WidthIcon /></IconBox><ScaleLabel>Width:</ScaleLabel><Combo>Automatic<Chevron /></Combo></SmallRow>
              <SmallRow><IconBox><HeightIcon /></IconBox><ScaleLabel>Height:</ScaleLabel><Combo>Automatic<Chevron /></Combo></SmallRow>
              <SmallRow><IconBox><ScaleIcon /></IconBox><ScaleLabel>Scale:</ScaleLabel><Spinner>100%<SpinArrows><SpinUp /><Caret /></SpinArrows></Spinner></SmallRow>
            </ScaleCol>
          </GroupBody>
          <GroupLabel $pr={14}>Scale to Fit</GroupLabel>
          <Launcher><LauncherIcon /></Launcher>
        </Group>

        <Group $w={123}>
          <GroupBody $pl={8}>
            <OptCol $w={55} $line>
              <OptHead>Gridlines</OptHead>
              <OptRow><MiniBox><CheckMark /></MiniBox>View</OptRow>
              <OptRow><MiniBox />Print</OptRow>
            </OptCol>
            <OptCol $w={56}>
              <OptHead>&nbsp;Headings</OptHead>
              <OptRow>&nbsp;<MiniBox><CheckMark /></MiniBox>View</OptRow>
              <OptRow>&nbsp;<MiniBox />Print</OptRow>
            </OptCol>
          </GroupBody>
          <GroupLabel $pr={15}>Sheet Options</GroupLabel>
          <Launcher><LauncherIcon /></Launcher>
        </Group>

        <Group $w={296}>
          <GroupBody $pl={6}>
            <LargeBtn $w={56}><IconSlot><BringIcon /></IconSlot><BtnLine>Bring</BtnLine><BtnLine>Forward<Caret /></BtnLine></LargeBtn>
            <LargeBtn $w={56}><IconSlot><SendIcon /></IconSlot><BtnLine>Send</BtnLine><BtnLine>Backward<Caret /></BtnLine></LargeBtn>
            <LargeBtn $w={54}><IconSlot><SelectionIcon /></IconSlot><BtnLine>Selection</BtnLine><BtnLine>Pane</BtnLine></LargeBtn>
            <LargeBtn $w={34}><IconSlot><AlignIcon /></IconSlot><BtnLine>Align</BtnLine><BtnLine><Caret /></BtnLine></LargeBtn>
            <LargeBtn $w={46} $off><IconSlot><GroupIcon /></IconSlot><BtnLine>Group</BtnLine><BtnLine><Caret $off /></BtnLine></LargeBtn>
            <LargeBtn $w={32} $off><IconSlot><RotateIcon /></IconSlot><BtnLine>Rotate</BtnLine><BtnLine><Caret $off /></BtnLine></LargeBtn>
          </GroupBody>
          <GroupLabel>Arrange</GroupLabel>
        </Group>
        <RibbonEnd>
          <svg width="11" height="6" viewBox="0 0 11 6"><path d="M.5 5.500l5-5 5 5" stroke="#666" fill="none" /></svg>
        </RibbonEnd>
      </Ribbon>

      <FormulaBar>
        <NameBox>A9<Caret /></NameBox>
        <Dots><svg width="3" height="13" viewBox="0 0 3 13" fill="#a8a8a8"><rect y="1" width="2" height="2" /><rect y="6" width="2" height="2" /><rect y="11" width="2" height="2" /></svg></Dots>
        <FnBox>
          <CloseGlyph c="#c6c6c6" />
          <svg width="13" height="11" viewBox="0 0 13 11"><path d="M1 6l4 4 7-9" stroke="#c6c6c6" strokeWidth="1.500" fill="none" /></svg>
          <FxText>fx</FxText>
        </FnBox>
        <FormulaInput>07/01/2020<Chevron c="#b5b5b5" w={10} /></FormulaInput>
      </FormulaBar>

      <SheetArea>
        <GridWrap>
          <HeaderRow>
            <Corner />
            <ColHead $w={129} $sel>A</ColHead>
            <ColHead $w={76}>B</ColHead>
            {letters.map(l => <ColHead key={l} $w={60}>{l}</ColHead>)}
            <ColHead $w={12} />
          </HeaderRow>
          <Rows>
            <Row $h={28}>
              <RowHead $bottom>1</RowHead>
              <TitleCell>Daily Sales - 2020</TitleCell>
              {blanks()}
            </Row>
            <Row $h={20}>
              <RowHead>2</RowHead>
              <HeadCell $w={129}>Date</HeadCell>
              <HeadCell $w={76}>Sales</HeadCell>
              {blanks()}
            </Row>
            {dates.map((v, i) => {
              const d = String(i + 1).padStart(2, '0');
              const sel = i === 6;
              return (
                <Row key={d} $h={18.75}>
                  <RowHead $sel={sel}>{i + 3}</RowHead>
                  <DataCell $w={129} $sel={sel}>{`${d}/01/2020`}</DataCell>
                  <DataCell $w={76}>{v}</DataCell>
                  {blanks()}
                </Row>
              );
            })}
          </Rows>
        </GridWrap>
        <VScroll>
          <VBtn><Tri d="u" /></VBtn>
          <VThumb />
          <VTrack />
          <VBtn><Tri d="d" /></VBtn>
        </VScroll>
      </SheetArea>

      <SheetBar>
        <SheetNav><Tri d="l" c="#c2c2c2" /><Tri d="r" c="#c2c2c2" /></SheetNav>
        <SheetTab>Sheet1</SheetTab>
        <AddSheet>
          <svg width="16" height="16" viewBox="0 0 16 16" fill="none" stroke="#777"><circle cx="8" cy="8" r="7" /><path d="M8 4v8M4 8h8" strokeWidth="1.300" /></svg>
        </AddSheet>
        <SplitDots><svg width="2" height="11" viewBox="0 0 2 11" fill="#b0b0b0"><rect width="2" height="2" /><rect y="4.500" width="2" height="2" /><rect y="9" width="2" height="2" /></svg></SplitDots>
        <HScroll>
          <HBtn><Tri d="l" c="#444" /></HBtn>
          <HThumb />
          <HTrack />
          <HBtn><Tri d="r" c="#444" /></HBtn>
        </HScroll>
      </SheetBar>

      <StatusBar>
        <ViewBtn $active>
          <svg width="13" height="12" viewBox="0 0 13 12" fill="none" stroke="#666"><rect x=".5" y=".5" width="12" height="11" /><path d="M4.500 0v12M8.500 0v12M0 4h13M0 8h13" /></svg>
        </ViewBtn>
        <ViewBtn>
          <svg width="14" height="12" viewBox="0 0 14 12" fill="none" stroke="#777"><rect x=".5" y=".5" width="13" height="11" /><rect x="3.500" y="2.500" width="7" height="7" /><path d="M5 4.500h4M5 7h4" /></svg>
        </ViewBtn>
        <ViewBtn>
          <svg width="13" height="12" viewBox="0 0 13 12" fill="none" stroke="#777"><rect x=".5" y=".5" width="12" height="11" /><path d="M4 .5V5.500h5V.5" /></svg>
        </ViewBtn>
        <ZoomArea>
          <span>−</span>
          <ZoomTrack />
          <span>+</span>
          <ZoomPct>100%</ZoomPct>
        </ZoomArea>
      </StatusBar>

      <Taskbar>
        <TaskItem $w={45}><WinLogo /></TaskItem>
        <TaskItem $w={45}><SearchLogo /></TaskItem>
        <TaskItem $w={45}><TaskViewLogo /></TaskItem>
        <TaskItem $w={48}><SnipLogo /></TaskItem>
        <TaskItem $w={46} $open><FolderLogo /></TaskItem>
        <TaskItem $w={46}><CalcLogo /></TaskItem>
        <TaskItem $w={46}><ObsLogo /></TaskItem>
        <TaskItem $w={46}><EdgeLogo /></TaskItem>
        <TaskItem $w={45} $open><ChromeLogo /></TaskItem>
        <TaskItem $w={46} $open><BadgeBox>Pr</BadgeBox></TaskItem>
        <TaskItem $w={47} $open><PptLogo /></TaskItem>
        <TaskItem $w={45} $open $active><TaskIconShift><XlLogo /></TaskIconShift></TaskItem>
        <Tray>
          <TrayItem $w={29}><svg width="13" height="7" viewBox="0 0 13 7"><path d="M.7 6.500l5.800-5.800 5.800 5.800" stroke="#fff" fill="none" strokeWidth="1.200" /></svg></TrayItem>
          <TrayItem $w={31}><svg width="15" height="14" viewBox="0 0 15 14" fill="none" stroke="#dfe5ec"><path d="M.5 13.500A13 13 0 0113.500.5M3.500 13.500a10 10 0 0110-10M6.500 13.500a7 7 0 017-7" /><circle cx="11.500" cy="12" r="1.500" fill="#fff" stroke="none" /></svg></TrayItem>
          <TrayItem $w={29}><svg width="16" height="9" viewBox="0 0 16 9"><rect x=".5" y=".5" width="13" height="8" fill="none" stroke="#fff" /><rect x="2" y="2" width="6" height="5" fill="#fff" /><rect x="14" y="3" width="2" height="3" fill="#fff" /></svg></TrayItem>
          <TrayItem $w={31}><svg width="16" height="10" viewBox="0 0 16 10"><path d="M3 10a3 3 0 01-.5-6A4.500 4.500 0 0111 3a3.500 3.500 0 012 7z" fill="#f2f4f6" /></svg></TrayItem>
          <TrayItem $w={28}><svg width="15" height="13" viewBox="0 0 15 13" fill="none" stroke="#eef1f5"><path d="M.5 4.500h2.500L7 1v11L3 8.500H.5z" /><path d="M9 4a4 4 0 010 5M11 2.500a6.500 6.500 0 010 8" /></svg></TrayItem>
          <TrayItem $w={34}><TrayText>ENG<br />UK</TrayText></TrayItem>
          <TrayItem $w={78}><TrayText>2:48 AM<br />01/06/2020</TrayText></TrayItem>
          <TrayItem $w={16}>
            <NotifyWrap>
              <svg width="16" height="17" viewBox="0 0 16 17"><path d="M0 0h16v12h-5l-4 5v-5H0z" fill="#eef2f6" /><path d="M3 3h10M3 6h10M3 9h7" stroke="#8a97a6" /></svg>
              <NotifyBadge>1</NotifyBadge>
            </NotifyWrap>
          </TrayItem>
        </Tray>
      </Taskbar>

      <Dialog>
        <DlgTitle>Page Setup<DlgHelp>?</DlgHelp><CloseGlyph c="#333" /></DlgTitle>
        <DlgTabs>
          <DlgTab $w={49}>Page</DlgTab>
          <DlgTab $w={56}>Margins</DlgTab>
          <DlgTab $w={88}>Header/Footer</DlgTab>
          <DlgTabActive><FocusBox>Sheet</FocusBox></DlgTabActive>
        </DlgTabs>
        <Panel>
          <FieldRow>
            <FieldLabel $w={57}>Print <u>a</u>rea:</FieldLabel>
            <RefInput><RefValue /><RefBtn><UpRef /></RefBtn></RefInput>
          </FieldRow>
          <SectionHead $mt={3}>Print titles</SectionHead>
          <FieldRow $mt={5} $indent>
            <FieldLabel $w={131}><u>R</u>ows to repeat at top:</FieldLabel>
            <RefInput><RefValue>$1:$2</RefValue><RefBtn><UpRef /></RefBtn></RefInput>
          </FieldRow>
          <FieldRow $mt={2} $indent>
            <FieldLabel $w={131}><u>C</u>olumns to repeat at left:</FieldLabel>
            <RefInput><RefValue /><RefBtn><UpRef /></RefBtn></RefInput>
          </FieldRow>
          <SectionHead $mt={7}>Print</SectionHead>
          <PrintBlock>
            <CheckCol>
              <CheckRow><CheckBox /><span><u>G</u>ridlines</span></CheckRow>
              <CheckRow><CheckBox /><span><u>B</u>lack and white</span></CheckRow>
              <CheckRow><CheckBox /><span>Draft <u>q</u>uality</span></CheckRow>
              <CheckRow><CheckBox /><span>Row and co<u>l</u>umn headings</span></CheckRow>
            </CheckCol>
            <SelectCol>
              <SelectRow><FieldLabel $w={74}>Co<u>m</u>ments:</FieldLabel><SelectBox><SelectValue>(None)</SelectValue><SelectBtn><Chevron c="#777" w={8} /></SelectBtn></SelectBox></SelectRow>
              <SelectRow><FieldLabel $w={74}>Cell <u>e</u>rrors as:</FieldLabel><SelectBox><SelectValue>displayed</SelectValue><SelectBtn><Chevron c="#777" w={8} /></SelectBtn></SelectBox></SelectRow>
            </SelectCol>
          </PrintBlock>
          <SectionHead $mt={6}>Page order</SectionHead>
          <OrderBlock>
            <RadioCol>
              <RadioRow><Radio $on /><span><u>D</u>own, then over</span></RadioRow>
              <RadioRow><Radio /><span>O<u>v</u>er, then down</span></RadioRow>
            </RadioCol>
            <OrderPic><OrderDrawing /></OrderPic>
          </OrderBlock>
          <PanelButtons>
            <DlgBtn $w={69}><span><u>P</u>rint...</span></DlgBtn>
            <DlgBtn $w={78}><span>Print Previe<u>w</u></span></DlgBtn>
            <DlgBtn $w={70}><span><u>O</u>ptions...</span></DlgBtn>
          </PanelButtons>
        </Panel>
        <DlgFooter>
          <DlgBtn $w={69} $primary>OK</DlgBtn>
          <DlgBtn $w={68}>Cancel</DlgBtn>
        </DlgFooter>
      </Dialog>
    </Page>
  );
}
